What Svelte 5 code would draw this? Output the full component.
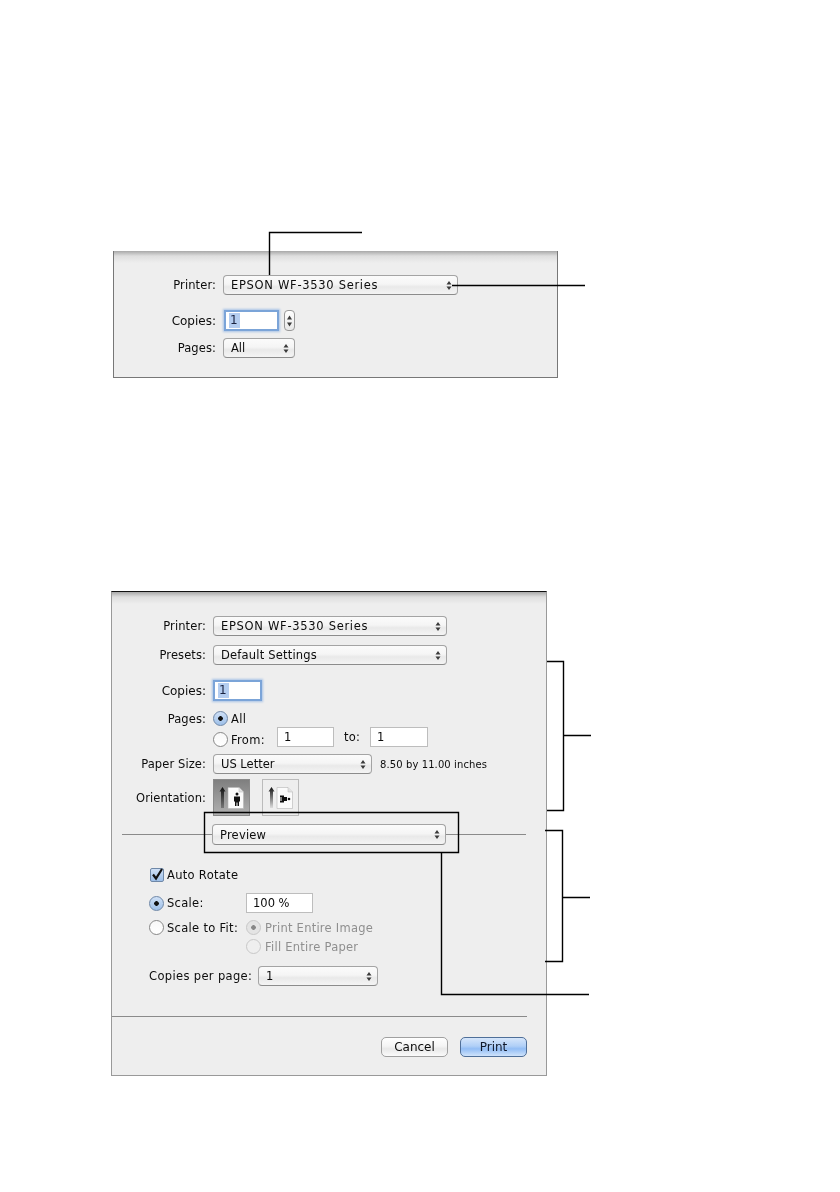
<script>
</script>

{#snippet updown()}
  <svg class="ud" width="6" height="11" viewBox="0 0 6 11"><path d="M3 1 5.5 4.6H.5Z M3 10 .5 6.4H5.5Z" fill="#3a3a3a"/></svg>
{/snippet}

{#snippet sel(text, cls)}
  <div class="sel {cls}"><span>{text}</span>{@render updown()}</div>
{/snippet}

{#snippet page(landscape, dark)}
  <svg width="36" height="36" viewBox="0 0 36 36">
    <defs>
      <linearGradient id={dark ? 'ad' : 'al'} x1="0" y1="0" x2="0" y2="1">
        <stop offset="0" stop-color="#111"/><stop offset="1" stop-color={dark ? '#777' : '#ddd'}/>
      </linearGradient>
    </defs>
    <path d="M8.5 7 11.5 11.5H10V28H7V11.5H5.5Z" fill="url(#{dark ? 'ad' : 'al'})"/>
    <path d="M14 7.5H25L29.5 12V28.5H14Z" fill="#fbfbfb" stroke="#b5b5b5" stroke-width=".6"/>
    <path d="M25 7.5V12H29.5" fill="#e2e2e2" stroke="#b5b5b5" stroke-width=".5"/>
    {#if landscape}
      <path d="M17 15.5H21V17H24V21H21V22.5H17V20.5H19V19.5H17V18.5H19V17.5H17Z" fill="#111"/>
      <circle cx="26" cy="19" r="1.3" fill="#111"/>
    {:else}
      <circle cx="23" cy="14" r="1.5" fill="#111"/>
      <path d="M20 16.5H26V21.5H25V26H23.5V22.5H22.5V26H21V21.5H20Z" fill="#111"/>
    {/if}
  </svg>
{/snippet}

<div class="doc">
  <section class="panel small">
    <div class="row r1"><div class="lab">Printer:</div>{@render sel('EPSON WF-3530 Series', 'w235 wide')}</div>
    <div class="row r2">
      <div class="lab big">Copies:</div>
      <div class="field focus w55"><mark>1</mark></div>
      <div class="stepper">
        <svg width="7" height="16" viewBox="0 0 7 16"><path d="M3.5 2.5 6 6.5H1Z M3.5 13.5 1 9.5H6Z" fill="#3a3a3a"/></svg>
      </div>
    </div>
    <div class="row r3"><div class="lab">Pages:</div>{@render sel('All', 'w72')}</div>
  </section>

  <section class="panel large">
    <div class="row p1"><div class="lab">Printer:</div>{@render sel('EPSON WF-3530 Series', 'w234 wide')}</div>
    <div class="row p2"><div class="lab">Presets:</div>{@render sel('Default Settings', 'w234 some')}</div>
    <div class="row p3"><div class="lab big">Copies:</div><div class="field focus w49"><mark>1</mark></div></div>
    <div class="row p4"><div class="lab">Pages:</div><i class="radio on"></i><span class="opt">All</span></div>
    <div class="row p5">
      <div class="lab"></div><i class="radio low"></i><span class="opt low">From:</span>
      <div class="field w57">1</div><span class="to">to:</span><div class="field w58">1</div>
    </div>
    <div class="row p6"><div class="lab">Paper Size:</div>{@render sel('US Letter', 'w159')}<span class="note">8.50 by 11.00 inches</span></div>
    <div class="row p7">
      <div class="lab">Orientation:</div>
      <div class="orient dark">{@render page(false, true)}</div>
      <div class="orient">{@render page(true, false)}</div>
    </div>
    <div class="sep"><hr class="lead"/>{@render sel('Preview', 'w234 some')}<hr/></div>

    <div class="group">
      <div class="row a1"><i class="check"><svg width="14" height="14" viewBox="0 0 14 14"><path d="M3 6.5 6 10.5 12 1" fill="none" stroke="#111" stroke-width="2.2"/></svg></i><span class="opt">Auto Rotate</span></div>
      <div class="row a2"><i class="radio on"></i><span class="opt c79">Scale:</span><div class="field w67">100 %</div></div>
      <div class="row a3"><i class="radio"></i><span class="opt c79">Scale to Fit:</span><i class="radio dim ond"></i><span class="opt dimt">Print Entire Image</span></div>
      <div class="row a4"><i class="radio dim"></i><span class="opt dimt">Fill Entire Paper</span></div>
      <div class="row a5"><span class="cpp">Copies per page:</span>{@render sel('1', 'w120')}</div>
    </div>

    <hr class="rule"/>
    <div class="buttons"><div class="btn">Cancel</div><div class="btn primary">Print</div></div>
  </section>

  <svg class="callouts" width="840" height="1192" viewBox="0 0 840 1192" fill="none" stroke="#000" stroke-width="1.4">
    <path d="M362 232.5H269.5V275"/>
    <path d="M452 285.5H585"/>
    <path d="M547 661.5H563.5V810.5H547M563.5 735.5H591"/>
    <path d="M545 830.5H562.5V961.5H545M562.5 897.5H590"/>
    <path d="M204.5 812.5H458.5V852.5H204.5Z"/>
    <path d="M441.5 853V994.5H589"/>
  </svg>
</div>

<style>
  :global(body) { margin: 0; background: #fff; }
  .doc {
    position: relative;
    width: 840px;
    height: 1192px;
    overflow: hidden;
    background: #fff;
    padding-top: 251px;
    box-sizing: border-box;
    font-family: "DejaVu Sans", sans-serif;
    font-size: 11.5px;
    color: #0c0c0c;
  }
  .panel {
    box-sizing: border-box;
    background: linear-gradient(#a8a8a8, #dedede 5px, #eeeeee 12px) no-repeat #eee;
    filter: blur(0.3px);
  }
  .small {
    width: 445px;
    height: 127px;
    margin-left: 113px;
    padding-top: 24px;
    border: 1px solid #777;
    border-top: 0;
    --lab: 102px;
  }
  .large {
    width: 436px;
    height: 485px;
    margin: 213px 0 0 111px;
    border: 1px solid #999;
    border-top: 1px solid #111;
    padding-top: 24px;
    --lab: 94px;
  }
  .row { display: flex; align-items: center; }
  .lab { width: var(--lab); margin-right: 7px; text-align: right; flex: none; white-space: nowrap; letter-spacing: .1px; }
  .lab.big { font-size: 12px; letter-spacing: 0; }
  .r2 { margin-top: 15px; }
  .r3 { margin-top: 7px; }
  .p2 { margin-top: 9px; }
  .p3 { margin-top: 15px; }
  .p4 { margin-top: 8px; height: 19px; }
  .p5 { margin-top: -1px; height: 20px; }
  .p6 { margin-top: 7px; }
  .p7 { margin-top: 5px; }

  .sel {
    box-sizing: border-box;
    height: 20px;
    display: flex;
    align-items: center;
    justify-content: space-between;
    padding: 0 5px 0 7px;
    border: 1px solid #a4a4a4;
    border-bottom-color: #8c8c8c;
    border-radius: 4px;
    background: linear-gradient(#fbfbfb, #f5f5f5 45%, #e9e9e9 60%, #f4f4f4);
    white-space: nowrap;
  }
  .ud { flex: none; }
  .wide { letter-spacing: .7px; }
  .some { letter-spacing: .2px; }
  .w235 { width: 235px; }
  .w234 { width: 234px; }
  .w72 { width: 72px; }
  .w159 { width: 159px; }
  .w120 { width: 120px; }

  .field {
    box-sizing: border-box;
    height: 20px;
    display: flex;
    align-items: center;
    padding-left: 6px;
    background: #fff;
    border: 1px solid #bdbdbd;
    font-size: 11.5px;
    flex: none;
  }
  .focus {
    height: 21px;
    padding-left: 3px;
    border: 2px solid #7ba4d8;
    box-shadow: 0 0 2px 1px #a9c4e6;
    font-size: 12px;
  }
  .small .focus { margin-left: 1px; }
  mark { background: #b4cdf0; color: #1a2340; padding: 0 2px 0 1px; line-height: 15px; }
  .w55 { width: 55px; }
  .w49 { width: 49px; }
  .w57 { width: 57px; }
  .w58 { width: 58px; }
  .w67 { width: 67px; }
  .stepper {
    box-sizing: border-box;
    width: 11px;
    height: 21px;
    margin-left: 5px;
    display: flex;
    align-items: center;
    justify-content: center;
    border: 1px solid #999;
    border-radius: 4px;
    background: linear-gradient(#fff, #e8e8e8);
  }

  .radio {
    box-sizing: border-box;
    width: 15px;
    height: 15px;
    margin-right: 3px;
    flex: none;
    border: 1px solid #888;
    border-radius: 50%;
    background: linear-gradient(#f8f8f8, #fff);
  }
  .radio.low { margin-top: 5px; }
  .radio.on { background: radial-gradient(circle at 50% 50%, #111 2px, transparent 2.6px), linear-gradient(#cfe0f6, #9dbfe8); border-color: #6f88a8; }
  .radio.dim { border-color: #c8c8c8; background: #efefef; margin-right: 4px; }
  .radio.ond { background: radial-gradient(circle at 50% 50%, #888 2px, transparent 2.6px), #e4e4e4; }
  .opt { white-space: nowrap; letter-spacing: .3px; }
  .opt.low { margin-top: 5px; width: 46px; flex: none; }
  .to { margin: 0 10px; letter-spacing: .2px; }
  .note { margin-left: 8px; font-size: 10px; letter-spacing: .1px; }
  .c79 { width: 79px; flex: none; }
  .dimt { color: #8f8f8f; letter-spacing: .25px; }

  .orient {
    box-sizing: border-box;
    width: 37px;
    height: 37px;
    margin-right: 12px;
    border: 1px solid #bbb;
    flex: none;
  }
  .orient.dark { background: linear-gradient(#7f7f7f, #b0b0b0); border-color: #8a8a8a; }
  .orient svg { display: block; }

  .sep { display: flex; align-items: center; margin: 8px 20px 0 10px; height: 21px; }
  .sep hr { flex: 1; height: 1px; border: 0; margin: 0; background: #8a8a8a; }
  .sep hr.lead { flex: none; width: 90px; }
  .sep .sel { margin: 0; height: 21px; flex: none; }

  .group { padding-left: 37px; }
  .a1 { margin-top: 22px; height: 15px; }
  .check {
    box-sizing: border-box;
    width: 14px;
    height: 14px;
    margin: 0 3px 0 1px;
    border: 1px solid #6f88a8;
    border-radius: 2px;
    background: linear-gradient(#cfe0f6, #9dbfe8);
    flex: none;
  }
  .check svg { display: block; margin: -1px; }
  .a2 { margin-top: 11px; }
  .a3 { margin-top: 5px; height: 19px; }
  .a4 { height: 19px; padding-left: 97px; }
  .a5 { margin-top: 10px; }
  .cpp { width: 109px; flex: none; white-space: nowrap; letter-spacing: .35px; }

  .rule { height: 1px; border: 0; background: #8a8a8a; margin: 30px 19px 0 0; }
  .buttons { display: flex; justify-content: flex-end; gap: 12px; margin: 20px 19px 0 0; }
  .btn {
    box-sizing: border-box;
    width: 67px;
    height: 20px;
    display: flex;
    align-items: center;
    justify-content: center;
    border: 1px solid #a0a0a0;
    border-radius: 5px;
    font-size: 12px;
    background: linear-gradient(#fff, #f4f4f4 45%, #e8e8e8 60%, #fafafa);
  }
  .primary {
    border-color: #4f6f99;
    background: linear-gradient(#d6e6fb, #b0cff7 45%, #92bdf5 60%, #cfe3fb);
    color: #10182a;
  }
  .callouts { position: absolute; left: 0; top: 0; pointer-events: none; }
</style>
